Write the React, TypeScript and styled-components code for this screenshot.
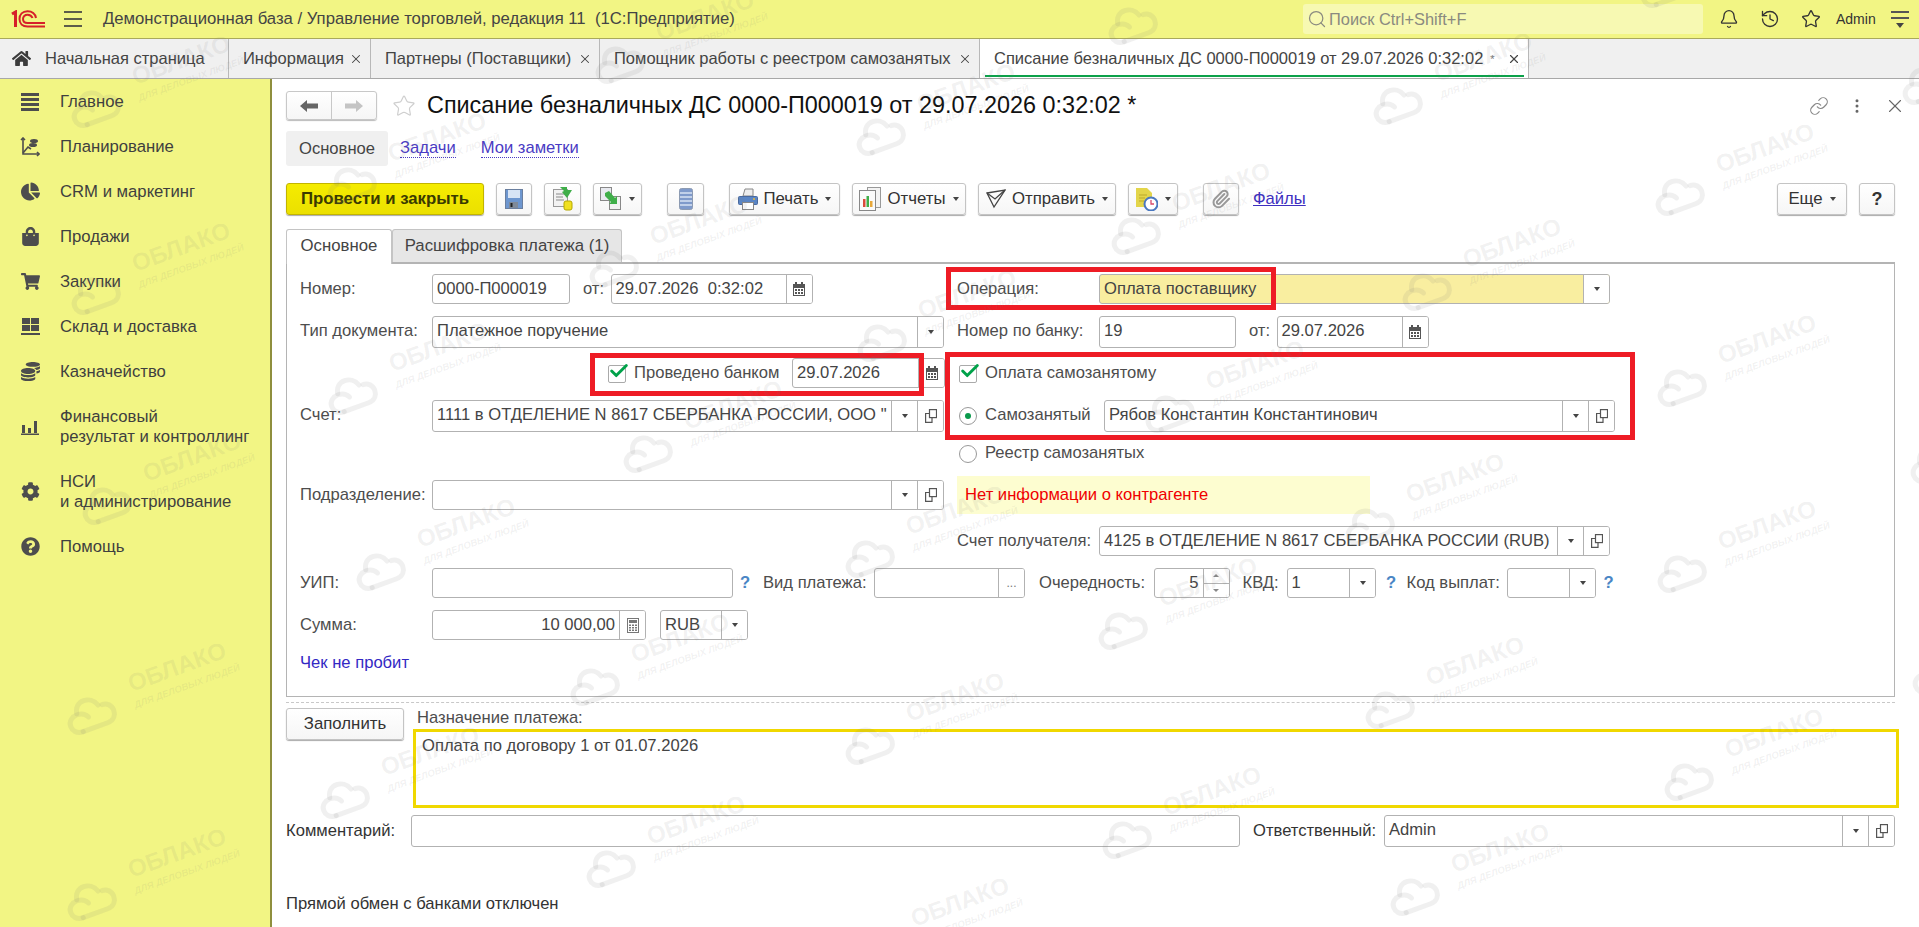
import React from "react";
import styled, { createGlobalStyle } from "styled-components";
import { Bell, Check, History, Link as LinkIcon, MoreVertical, Paperclip, Search, Star, X } from "lucide-react";
import {
  FaChartPie,
  FaCoins,
  FaCog,
  FaHome,
  FaQuestionCircle,
  FaShoppingBag,
  FaShoppingCart,
} from "react-icons/fa";

const GlobalStyle = createGlobalStyle`
  html, body { margin: 0; padding: 0; background: #fff; }
  body {
    font-family: "Liberation Sans", Arial, sans-serif;
    font-size: 16.6px;
    color: #333;
  }
  * { box-sizing: border-box; }
`;

const Page = styled.div`
  position: relative;
  width: 1919px;
  height: 927px;
  overflow: hidden;
  display: flex;
  flex-direction: column;
`;

/* top bar */
const TopBar = styled.div`
  display: flex;
  align-items: center;
  height: 39px;
  flex: none;
  background: #f2f584;
  border-bottom: 1px solid #a9a95c;
  padding-left: 11px;
`;

const Burger = styled.div`
  width: 18px;
  height: 16px;
  margin-left: 19px;
  display: flex;
  flex-direction: column;
  justify-content: space-between;
  span {
    display: block;
    height: 2px;
    background: #5c5c4a;
  }
`;

const BaseTitle = styled.div`
  margin-left: 21px;
  font-size: 16.7px;
  color: #444;
  white-space: pre;
`;

const SearchBox = styled.div`
  margin-left: auto;
  margin-right: 5px;
  width: 400px;
  height: 30px;
  display: flex;
  align-items: center;
  gap: 2px;
  padding-left: 4px;
  border-radius: 3px;
  background: #f7f9b2;
  color: #8a8a80;
  font-size: 16.4px;
`;

const TopIcon = styled.div`
  width: 41px;
  display: flex;
  justify-content: center;
  color: #333;
`;

const AdminName = styled.div`
  width: 55px;
  margin-left: 5px;
  font-size: 14px;
  color: #333;
`;

const TopMenu = styled.div`
  width: 18px;
  margin-right: 10px;
  display: flex;
  flex-direction: column;
  align-items: center;
  gap: 4px;
  i {
    display: block;
    width: 18px;
    height: 2px;
    background: #555;
  }
  b {
    width: 0;
    height: 0;
    border-left: 4px solid transparent;
    border-right: 4px solid transparent;
    border-top: 5px solid #444;
  }
`;

/* open windows */
const TabBar = styled.div`
  display: flex;
  flex: none;
  height: 40px;
  background: #f0f0f0;
  border-bottom: 1px solid #a8a8a8;
`;

const WinTab = styled.div<{ $w: number; $active?: boolean }>`
  position: relative;
  width: ${(p) => p.$w}px;
  display: flex;
  align-items: center;
  padding: 0 7px 0 14px;
  border-right: 1px solid #b8b8b8;
  font-size: 16.5px;
  color: #444;
  white-space: nowrap;
  background: ${(p) => (p.$active ? "#fff" : "transparent")};
  ${(p) =>
    p.$active &&
    `&:after {
      content: "";
      position: absolute;
      left: 5px;
      right: 4px;
      bottom: 1px;
      height: 2px;
      background: #0ca14a;
    }`}
  svg.close {
    margin-left: auto;
    color: #444;
  }
`;

const HomeIcon = styled(FaHome)`
  color: #3c3c3c;
  margin: 0 14px 0 -2px;
  font-size: 19px;
`;

const Mod = styled.sup`
  font-size: 11px;
  line-height: 0;
  margin-left: 7px;
  color: #777;
`;

const Body = styled.div`
  flex: 1;
  display: flex;
  min-height: 0;
`;

/* sections panel */
const Sidebar = styled.div`
  width: 272px;
  flex: none;
  background: #f2f584;
  border-right: 2px solid #8f8f3e;
`;

const NavItem = styled.div<{ $tall?: boolean }>`
  display: flex;
  align-items: center;
  height: ${(p) => (p.$tall ? 65 : 45)}px;
  font-size: 16.7px;
  line-height: 20px;
  color: #3f3f3f;
`;

const NavIcon = styled.div`
  width: 60px;
  flex: none;
  display: flex;
  justify-content: center;
  color: #4d4d4d;
  font-size: 19px;
`;

/* document */
const Content = styled.div`
  flex: 1;
  min-width: 0;
  padding: 12px 24px 0 14px;
  background: #fff;
`;

const Header = styled.div`
  display: flex;
  align-items: center;
  height: 29px;
`;

const NavPair = styled.div`
  display: flex;
  width: 91px;
  height: 29px;
  border: 1px solid #c8c8c8;
  border-radius: 3px;
  box-shadow: 0 1px 1px #bbb;
  background: linear-gradient(#fff, #f6f6f6);
  div {
    flex: 1;
    display: flex;
    align-items: center;
    justify-content: center;
  }
  div + div {
    border-left: 1px solid #c8c8c8;
  }
`;

const FavStar = styled(Star)`
  margin-left: 15px;
  color: #cfcfcf;
`;

const DocTitle = styled.div`
  margin-left: 11px;
  font-size: 23.4px;
  color: #111;
  white-space: nowrap;
`;

const HeadTools = styled.div`
  margin-left: auto;
  margin-right: -19px;
  display: flex;
  align-items: center;
  color: #8a8a8a;
`;

const HeadTool = styled.div`
  width: 38px;
  display: flex;
  justify-content: center;
  color: #666;
`;

const PageTabs = styled.div`
  display: flex;
  align-items: center;
  height: 35px;
  margin-top: 11px;
`;

const PagePill = styled.div`
  width: 102px;
  height: 35px;
  line-height: 35px;
  text-align: center;
  border-radius: 3px;
  background: #f0f0f0;
  color: #444;
`;

const PageLink = styled.a`
  margin-left: 12px;
  margin-right: 13px;
  color: #4a3bc4;
  line-height: 18px;
  border-bottom: 1px dotted #4a3bc4;
`;

const CommandBar = styled.div`
  display: flex;
  align-items: center;
  gap: 25px;
  height: 32px;
  margin-top: 17px;
`;

const Group = styled.div`
  display: flex;
  align-items: center;
  gap: 12px;
`;

const ToolButton = styled.div<{ $w: number }>`
  width: ${(p) => p.$w}px;
  height: 32px;
  display: flex;
  align-items: center;
  justify-content: center;
  gap: 6px;
  font-size: 16.8px;
  color: #333;
  white-space: nowrap;
  border: 1px solid #c4c4c4;
  border-radius: 3px;
  background: linear-gradient(#fff, #f6f6f6);
  box-shadow: 0 1px 1px #aaa;
`;

const PrimaryButton = styled(ToolButton)`
  font-weight: 700;
  color: #3a3a00;
  background: linear-gradient(#f5ec00, #ebe000);
  border-color: #c2b400;
`;

const Caret = styled.span`
  width: 0;
  height: 0;
  flex: none;
  margin-left: 1px;
  border-left: 3px solid transparent;
  border-right: 3px solid transparent;
  border-top: 4px solid #444;
`;

const SpinUp = styled(Caret)`
  margin: 0;
  border-top: none;
  border-bottom: 3px solid #888;
`;

const SpinDown = styled(Caret)`
  margin: 0;
  border-top: 3px solid #888;
`;

const FilesLink = styled.a`
  margin-left: -11px;
  color: #3d2fc0;
  text-decoration: underline;
`;

const BarEnd = styled(Group)`
  margin-left: auto;
`;

const HelpMark = styled.b`
  font-size: 18px;
`;

const FormTabs = styled.div`
  display: flex;
  height: 33px;
  margin-top: 14px;
  font-size: 16.8px;
`;

const FormTab = styled.div<{ $w: number; $active?: boolean }>`
  position: relative;
  z-index: 1;
  width: ${(p) => p.$w}px;
  height: ${(p) => (p.$active ? 35 : 33)}px;
  line-height: 31px;
  text-align: center;
  border: 1px solid #c4c4c4;
  border-bottom: none;
  border-radius: 3px 3px 0 0;
  color: #444;
  background: ${(p) => (p.$active ? "#fff" : "#e6e6e6")};
`;

const Panel = styled.div`
  position: relative;
  height: 435px;
  border: 1px solid #b4b4b4;
  border-top: 2px solid #b4b4b4;
  padding: 10px 0 0 13px;
`;

const Columns = styled.div`
  display: flex;
`;

const LeftColumn = styled.div`
  width: 645px;
  display: grid;
  grid-auto-rows: 42px;
`;

const RightColumn = styled(LeftColumn)`
  width: 680px;
  margin-left: 12px;
`;

const Row = styled.div<{ $end?: boolean; $up?: number }>`
  display: flex;
  align-items: flex-start;
  height: 42px;
  margin-top: ${(p) => -(p.$up ?? 0)}px;
  justify-content: ${(p) => (p.$end ? "flex-end" : "flex-start")};
`;

const Label = styled.div<{ $w: number; $ml?: number }>`
  width: ${(p) => p.$w}px;
  flex: none;
  margin-left: ${(p) => p.$ml ?? 0}px;
  line-height: 30px;
  color: #4d4d4d;
  white-space: nowrap;
`;

const Field = styled.div<{ $w: number; $h?: number; $fill?: string; $ml?: number }>`
  display: flex;
  flex: none;
  width: ${(p) => p.$w}px;
  height: ${(p) => p.$h ?? 30}px;
  margin-left: ${(p) => p.$ml ?? 0}px;
  border: 1px solid #b2b2b2;
  border-radius: 3px;
  background: ${(p) => p.$fill ?? "#fff"};
  overflow: hidden;
`;

const Value = styled.div<{ $right?: boolean }>`
  flex: 1;
  min-width: 0;
  padding: 0 4px;
  line-height: 28px;
  color: #444;
  white-space: pre;
  overflow: hidden;
  text-align: ${(p) => (p.$right ? "right" : "left")};
`;

const Addon = styled.div`
  width: 26px;
  flex: none;
  display: flex;
  align-items: center;
  justify-content: center;
  border-left: 1px solid #b2b2b2;
  background: #fff;
  color: #777;
  font-size: 12px;
`;

const Spin = styled(Addon)`
  flex-direction: column;
`;

const SpinCell = styled.div`
  flex: 1;
  width: 100%;
  display: flex;
  align-items: center;
  justify-content: center;
  & + & {
    border-top: 1px solid #b2b2b2;
  }
`;

const Help = styled.div<{ $w: number; $pr?: number }>`
  width: ${(p) => p.$w}px;
  flex: none;
  padding-right: ${(p) => p.$pr ?? 0}px;
  text-align: center;
  line-height: 30px;
  font-weight: 700;
  color: #4a86c5;
`;

const CheckBox = styled.div`
  position: relative;
  width: 18px;
  height: 18px;
  flex: none;
  margin: 7px 8px 0 2px;
  border: 1px solid #aaa;
  border-radius: 2px;
  svg {
    position: absolute;
    left: -1px;
    top: -6px;
    color: #00a24a;
  }
`;

const Radio = styled.div<{ $on?: boolean }>`
  position: relative;
  width: 18px;
  height: 18px;
  flex: none;
  margin: 7px 8px 0 2px;
  border: 1px solid #999;
  border-radius: 50%;
  ${(p) =>
    p.$on &&
    `&:after {
      content: "";
      position: absolute;
      left: 5px;
      top: 5px;
      width: 6px;
      height: 6px;
      border-radius: 50%;
      background: #0a9a4c;
    }`}
`;

const Notice = styled.div`
  width: 413px;
  height: 38px;
  margin-top: -8px;
  padding-left: 8px;
  line-height: 38px;
  background: #fdfdd0;
  color: #f00000;
`;

const CheckLink = styled.a`
  line-height: 22px;
  color: #3328c4;
`;

const RedFrame = styled.div<{ $x: number; $y: number; $w: number; $h: number }>`
  position: absolute;
  left: ${(p) => p.$x}px;
  top: ${(p) => p.$y}px;
  width: ${(p) => p.$w}px;
  height: ${(p) => p.$h}px;
  border: 5px solid #ee1c25;
  pointer-events: none;
`;

const DottedLine = styled.div`
  margin-top: 5px;
  border-top: 1px dashed #c8c8c8;
`;

const PurposeRow = styled.div`
  display: flex;
  margin-top: 5px;
`;

const FillButton = styled(ToolButton)`
  flex: none;
`;

const PurposeBlock = styled.div`
  flex: 1;
  margin: 0 -4px 0 9px;
`;

const PurposeLabel = styled.div`
  height: 21px;
  padding-left: 4px;
  line-height: 20px;
  color: #4d4d4d;
`;

const PurposeBox = styled.div`
  height: 79px;
  border: 3px solid #f0d800;
  padding: 4px 6px;
  line-height: 20px;
  color: #444;
`;

const CommentRow = styled.div`
  display: flex;
  margin-top: 7px;
`;

const PlainLabel = styled(Label)`
  line-height: 32px;
  color: #333;
`;

const BankNote = styled.div`
  margin-top: 47px;
  line-height: 20px;
  color: #333;
`;

/* watermark */
const Marks = styled.div`
  position: absolute;
  inset: 0;
  pointer-events: none;
  overflow: hidden;
  z-index: 5;
`;

const Mark = styled.div<{ $x: number; $y: number }>`
  position: absolute;
  left: ${(p) => p.$x - 120}px;
  top: ${(p) => p.$y - 40}px;
  width: 240px;
  height: 120px;
`;

const MarkTitle = styled.div`
  position: absolute;
  left: 120px;
  top: 40px;
  transform: translate(-50%, -50%) rotate(-20deg);
  font-size: 24px;
  font-weight: 700;
  line-height: 1;
  color: rgba(120, 120, 120, 0.1);
  white-space: nowrap;
`;

const MarkSub = styled(MarkTitle)`
  left: 130px;
  top: 59px;
  font-size: 9.5px;
  font-style: italic;
`;

const MarkCloud = styled.svg`
  position: absolute;
  left: 8px;
  top: 66px;
  width: 52px;
  height: 44px;
  transform: rotate(-20deg);
`;

const markPlaces = [
  [181, 60], [181, 247], [192, 457], [177, 667], [177, 853],
  [437, 137], [438, 347], [466, 523], [430, 751],
  [705, 16], [699, 220], [733, 405], [680, 638], [696, 820],
  [966, 88], [967, 294], [955, 510], [955, 697], [960, 902],
  [1218, -23], [1221, 187], [1255, 365], [1208, 582], [1212, 791],
  [1483, 57], [1512, 243], [1455, 478], [1475, 661], [1500, 848],
  [1750, -60], [1765, 148], [1767, 339], [1767, 525], [1774, 733],
  [2012, 37], [2020, 416], [2022, 627],
];

const Watermarks = () => (
  <Marks>
    {markPlaces.map(([x, y]) => (
      <Mark key={`${x}-${y}`} $x={x} $y={y}>
        {x < 1919 && y > 0 && <MarkTitle>ОБЛАКО</MarkTitle>}
        {x < 1919 && y > 0 && <MarkSub>ДЛЯ ДЕЛОВЫХ ЛЮДЕЙ</MarkSub>}
        <MarkCloud viewBox="0 0 52 44" fill="none" stroke="rgba(120,120,120,0.11)" strokeWidth="5" strokeLinecap="round">
          <path d="M13 35 H39 C46 35 49 30 49 25 C49 20 45 16 40 16" />
          <path d="M36 15 C34 9 29 6 24 6 C18 6 14 10 13 16" />
          <path d="M13 35 C6 35 3 30 3 26 C3 20 8 17 13 17 C17 17 21 19 23 23" />
        </MarkCloud>
      </Mark>
    ))}
  </Marks>
);

/* drawn icons */
const Logo = () => (
  <svg width="34" height="18" viewBox="0 0 34 18" fill="none" stroke="#d6202a">
    <path d="M1 4 L4.5 2 V17" strokeWidth="3" />
    <path d="M25 8 C24 3 20 1.2 16.5 1.2 C11.5 1.2 8.5 4.5 8.5 9 C8.5 13.5 11.5 16.5 16.5 16.5 H34" strokeWidth="2" />
    <path d="M21.5 8 C20.5 5.5 19 4.7 16.5 4.7 C13.8 4.7 12 6.5 12 9 C12 11.5 13.8 13 16.5 13 H34" strokeWidth="2" />
  </svg>
);

const MenuBars = () => (
  <svg width="18" height="18" viewBox="0 0 18 18" fill="#4d4d4d">
    <rect y="0" width="18" height="3" />
    <rect y="5" width="18" height="3" />
    <rect y="10" width="18" height="3" />
    <rect y="15" width="18" height="3" />
  </svg>
);

const PlanIcon = () => (
  <svg width="20" height="20" viewBox="0 0 20 20" fill="none" stroke="#4d4d4d" strokeWidth="1.6">
    <path d="M3 1 V17 H19" />
    <path d="M1 3 L3 1 L5 3 M17 15 L19 17 L17 19" />
    <path d="M3 16 L8 10 L11 12" />
    <ellipse cx="14" cy="4" rx="4" ry="2" fill="#4d4d4d" stroke="none" />
    <ellipse cx="13" cy="8" rx="4" ry="2" fill="#4d4d4d" stroke="none" />
  </svg>
);

const StoreIcon = () => (
  <svg width="19" height="19" viewBox="0 0 19 19" fill="#4d4d4d">
    <rect x="1" y="1" width="8" height="6" />
    <rect x="10" y="1" width="8" height="6" />
    <rect x="1" y="8" width="8" height="6" />
    <rect x="10" y="8" width="8" height="6" />
    <rect x="0" y="16" width="19" height="2" />
  </svg>
);

const BarsIcon = () => (
  <svg width="18" height="16" viewBox="0 0 18 16" fill="#4d4d4d">
    <rect x="1" y="6" width="3" height="8" />
    <rect x="7" y="9" width="3" height="5" />
    <rect x="13" y="2" width="3" height="12" />
    <rect x="0" y="14.5" width="18" height="1.5" />
  </svg>
);

const ArrowLeft = () => (
  <svg width="18" height="12" viewBox="0 0 18 12" fill="#666">
    <path d="M0 6 L7 0 V3.5 H18 V8.5 H7 V12 Z" />
  </svg>
);

const ArrowRight = () => (
  <svg width="18" height="12" viewBox="0 0 18 12" fill="#c4c4c4">
    <path d="M18 6 L11 0 V3.5 H0 V8.5 H11 V12 Z" />
  </svg>
);

const SaveIcon = () => (
  <svg width="18" height="20" viewBox="0 0 18 20">
    <rect x="0.5" y="0.5" width="17" height="19" fill="#6d96cf" stroke="#6a7f9f" />
    <rect x="3" y="1" width="12" height="8" fill="#d7e4f5" />
    <rect x="4" y="13" width="9" height="6" fill="#7f8a99" />
    <rect x="5.5" y="14" width="2" height="4" fill="#222" />
  </svg>
);

const PostIcon = () => (
  <svg width="20" height="24" viewBox="0 0 20 24">
    <rect x="0.5" y="2.5" width="14" height="17" fill="#f2f2f2" stroke="#999" />
    <path d="M3 7 H12 M3 10 H10 M3 13 H11" stroke="#8a8a8a" />
    <path d="M7 0 L14 0 L14 3 L19 3 L14 11 L9 5 L11 4 Z" fill="#3fae49" />
    <rect x="11" y="14" width="8" height="9" rx="2" fill="#f0e020" stroke="#b5a800" />
  </svg>
);

const CopyIcon = () => (
  <svg width="22" height="24" viewBox="0 0 22 24">
    <rect x="0.5" y="0.5" width="11" height="13" fill="#e8eaf0" stroke="#888" />
    <rect x="9.5" y="9.5" width="11" height="13" fill="#f2f2f2" stroke="#888" />
    <path d="M5 6 L9 4 L15 11 L17 9 L17 17 L9 17 L11 15 L5 9 Z" fill="#3fae49" />
  </svg>
);

const StackIcon = () => (
  <svg width="14" height="22" viewBox="0 0 14 22">
    <rect x="0.5" y="0.5" width="13" height="21" rx="2" fill="#7f9acb" stroke="#8d9bb2" />
    <path d="M1 5 H13 M1 9 H13 M1 13 H13 M1 17 H13" stroke="#d7e2f3" strokeWidth="1.4" />
  </svg>
);

const PrintIcon = () => (
  <svg width="20" height="22" viewBox="0 0 20 22">
    <path d="M5 8 L7 1 H15 V8 Z" fill="#eee" stroke="#888" />
    <rect x="0.5" y="8.5" width="19" height="8" rx="1" fill="#5b86c5" stroke="#4a6a9f" />
    <rect x="4.5" y="14.5" width="11" height="7" fill="#fff" stroke="#888" />
    <circle cx="16" cy="11" r="1" fill="#e8b83a" />
  </svg>
);

const ReportIcon = () => (
  <svg width="22" height="24" viewBox="0 0 22 24">
    <rect x="8.5" y="0.5" width="13" height="20" fill="#f3f3f3" stroke="#999" />
    <rect x="0.5" y="3.5" width="16" height="20" fill="#fafafa" stroke="#888" />
    <rect x="4" y="12" width="2.5" height="8" fill="#d94b3b" />
    <rect x="7.5" y="9" width="2.5" height="11" fill="#3fae49" />
    <rect x="11" y="14" width="2.5" height="6" fill="#e8a83a" />
  </svg>
);

const SendIcon = () => (
  <svg width="20" height="20" viewBox="0 0 20 20" fill="none" stroke="#444" strokeWidth="1.3">
    <path d="M1 4 L19 1 L8 18 Z" />
    <path d="M1 4 L9 10 L19 1" />
  </svg>
);

const DocClockIcon = () => (
  <svg width="22" height="24" viewBox="0 0 22 24">
    <path d="M0 1 H11 L16 6 V20 H0 Z" fill="#e3d54a" />
    <path d="M3 8 H11 M3 11 H9 M3 14 H8" stroke="#bba92a" />
    <circle cx="15" cy="17" r="6.5" fill="#fff" stroke="#4a78c0" strokeWidth="2" />
    <path d="M15 13 V17 H18" stroke="#d94b6b" strokeWidth="1.3" fill="none" />
  </svg>
);

const CalendarIcon = () => (
  <svg width="12" height="14" viewBox="0 0 12 14" fill="#555">
    <rect x="2" y="0" width="2" height="3" />
    <rect x="8" y="0" width="2" height="3" />
    <path d="M0 2 H12 V14 H0 Z M1 6 V13 H11 V6 Z" fillRule="evenodd" />
    <path d="M2 7 H4 V9 H2 Z M5 7 H7 V9 H5 Z M8 7 H10 V9 H8 Z M2 10 H4 V12 H2 Z M5 10 H7 V12 H5 Z M8 10 H10 V12 H8 Z" />
  </svg>
);

const CalcIcon = () => (
  <svg width="12" height="15" viewBox="0 0 12 15" fill="#777">
    <path d="M0 0 H12 V15 H0 Z M1 1 V14 H11 V1 Z" fillRule="evenodd" />
    <rect x="2" y="2" width="8" height="3" />
    <path d="M2 6.5 H4 V8 H2 Z M5 6.5 H7 V8 H5 Z M8 6.5 H10 V8 H8 Z M2 9 H4 V10.5 H2 Z M5 9 H7 V10.5 H5 Z M8 9 H10 V10.5 H8 Z M2 11.5 H4 V13 H2 Z M5 11.5 H7 V13 H5 Z M8 11.5 H10 V13 H8 Z" />
  </svg>
);

const OpenIcon = () => (
  <svg width="12" height="14" viewBox="0 0 12 14" fill="none" stroke="#555" strokeWidth="1.2">
    <rect x="4.5" y="0.6" width="7" height="8" />
    <path d="M4 4.5 H0.6 V13.4 H7 V9" />
  </svg>
);

const Drop = () => <Addon><Caret /></Addon>;
const Open = () => <Addon><OpenIcon /></Addon>;
const Cal = () => <Addon><CalendarIcon /></Addon>;

const App = () => (
  <Page>
    <GlobalStyle />
    <TopBar>
      <Logo />
      <Burger><span /><span /><span /></Burger>
      <BaseTitle>Демонстрационная база / Управление торговлей, редакция 11  (1С:Предприятие)</BaseTitle>
      <SearchBox>
        <Search size={20} strokeWidth={1.5} />
        Поиск Ctrl+Shift+F
      </SearchBox>
      <TopIcon><Bell size={20} strokeWidth={1.6} /></TopIcon>
      <TopIcon><History size={20} strokeWidth={1.6} /></TopIcon>
      <TopIcon><Star size={20} strokeWidth={1.6} /></TopIcon>
      <AdminName>Admin</AdminName>
      <TopMenu><i /><i /><b /></TopMenu>
    </TopBar>

    <TabBar>
      <WinTab $w={229}><HomeIcon />Начальная страница</WinTab>
      <WinTab $w={142}>Информация<X className="close" size={14} strokeWidth={1.8} /></WinTab>
      <WinTab $w={229}>Партнеры (Поставщики)<X className="close" size={14} strokeWidth={1.8} /></WinTab>
      <WinTab $w={380}>Помощник работы с реестром самозанятых<X className="close" size={14} strokeWidth={1.8} /></WinTab>
      <WinTab $w={549} $active>
        Списание безналичных ДС 0000-П000019 от 29.07.2026 0:32:02<Mod>*</Mod>
        <X className="close" size={14} strokeWidth={2} />
      </WinTab>
    </TabBar>

    <Body>
      <Sidebar>
        <NavItem><NavIcon><MenuBars /></NavIcon>Главное</NavItem>
        <NavItem><NavIcon><PlanIcon /></NavIcon>Планирование</NavItem>
        <NavItem><NavIcon><FaChartPie /></NavIcon>CRM и маркетинг</NavItem>
        <NavItem><NavIcon><FaShoppingBag /></NavIcon>Продажи</NavItem>
        <NavItem><NavIcon><FaShoppingCart /></NavIcon>Закупки</NavItem>
        <NavItem><NavIcon><StoreIcon /></NavIcon>Склад и доставка</NavItem>
        <NavItem><NavIcon><FaCoins /></NavIcon>Казначейство</NavItem>
        <NavItem $tall><NavIcon><BarsIcon /></NavIcon><span>Финансовый<br />результат и контроллинг</span></NavItem>
        <NavItem $tall><NavIcon><FaCog /></NavIcon><span>НСИ<br />и администрирование</span></NavItem>
        <NavItem><NavIcon><FaQuestionCircle /></NavIcon>Помощь</NavItem>
      </Sidebar>

      <Content>
        <Header>
          <NavPair>
            <div><ArrowLeft /></div>
            <div><ArrowRight /></div>
          </NavPair>
          <FavStar size={24} strokeWidth={1.2} />
          <DocTitle>Списание безналичных ДС 0000-П000019 от 29.07.2026 0:32:02 *</DocTitle>
          <HeadTools>
            <HeadTool><LinkIcon size={20} strokeWidth={1.4} color="#888" /></HeadTool>
            <HeadTool><MoreVertical size={18} strokeWidth={2} /></HeadTool>
            <HeadTool><X size={22} strokeWidth={1.2} /></HeadTool>
          </HeadTools>
        </Header>

        <PageTabs>
          <PagePill>Основное</PagePill>
          <PageLink>Задачи</PageLink>
          <PageLink>Мои заметки</PageLink>
        </PageTabs>

        <CommandBar>
          <Group>
            <PrimaryButton $w={198}>Провести и закрыть</PrimaryButton>
            <ToolButton $w={36}><SaveIcon /></ToolButton>
            <ToolButton $w={37}><PostIcon /></ToolButton>
            <ToolButton $w={49}><CopyIcon /><Caret /></ToolButton>
          </Group>
          <ToolButton $w={37}><StackIcon /></ToolButton>
          <Group>
            <ToolButton $w={111}><PrintIcon />Печать<Caret /></ToolButton>
            <ToolButton $w={114}><ReportIcon />Отчеты<Caret /></ToolButton>
            <ToolButton $w={138}><SendIcon />Отправить<Caret /></ToolButton>
            <ToolButton $w={50}><DocClockIcon /><Caret /></ToolButton>
          </Group>
          <ToolButton $w={36}><Paperclip size={20} strokeWidth={2.4} color="#999" /></ToolButton>
          <FilesLink>Файлы</FilesLink>
          <BarEnd>
            <ToolButton $w={70}>Еще<Caret /></ToolButton>
            <ToolButton $w={36}><HelpMark>?</HelpMark></ToolButton>
          </BarEnd>
        </CommandBar>

        <FormTabs>
          <FormTab $w={106} $active>Основное</FormTab>
          <FormTab $w={230}>Расшифровка платежа (1)</FormTab>
        </FormTabs>

        <Panel>
          <Columns>
            <LeftColumn>
              <Row>
                <Label $w={132}>Номер:</Label>
                <Field $w={138}><Value>0000-П000019</Value></Field>
                <Label $w={27.5} $ml={13}>от:</Label>
                <Field $w={202}><Value>29.07.2026  0:32:02</Value><Cal /></Field>
              </Row>
              <Row>
                <Label $w={132}>Тип документа:</Label>
                <Field $w={512} $h={32}><Value>Платежное поручение</Value><Drop /></Field>
              </Row>
              <Row $end>
                <CheckBox><Check size={22} strokeWidth={3.2} /></CheckBox>
                <Label $w={158}>Проведено банком</Label>
                <Field $w={153}><Value>29.07.2026</Value><Cal /></Field>
              </Row>
              <Row>
                <Label $w={132}>Счет:</Label>
                <Field $w={512} $h={32}>
                  <Value>1111 в ОТДЕЛЕНИЕ N 8617 СБЕРБАНКА РОССИИ, ООО "</Value>
                  <Drop />
                  <Open />
                </Field>
              </Row>
              <Row />
              <Row $up={4}>
                <Label $w={132}>Подразделение:</Label>
                <Field $w={512}><Value /><Drop /><Open /></Field>
              </Row>
              <Row />
            </LeftColumn>

            <RightColumn>
              <Row>
                <Label $w={142}>Операция:</Label>
                <Field $w={511} $fill="#f9eea0"><Value>Оплата поставщику</Value><Drop /></Field>
              </Row>
              <Row>
                <Label $w={142}>Номер по банку:</Label>
                <Field $w={137} $h={32}><Value>19</Value></Field>
                <Label $w={27.5} $ml={13}>от:</Label>
                <Field $w={152} $h={32}><Value>29.07.2026</Value><Cal /></Field>
              </Row>
              <Row>
                <CheckBox><Check size={22} strokeWidth={3.2} /></CheckBox>
                <Label $w={300}>Оплата самозанятому</Label>
              </Row>
              <Row>
                <Radio $on />
                <Label $w={119}>Самозанятый</Label>
                <Field $w={511} $h={32}><Value>Рябов Константин Константинович</Value><Drop /><Open /></Field>
              </Row>
              <Row $up={4}>
                <Radio />
                <Label $w={300}>Реестр самозанятых</Label>
              </Row>
              <Row>
                <Notice>Нет информации о контрагенте</Notice>
              </Row>
              <Row>
                <Label $w={142}>Счет получателя:</Label>
                <Field $w={511}><Value>4125 в ОТДЕЛЕНИЕ N 8617 СБЕРБАНКА РОССИИ (RUB)</Value><Drop /><Open /></Field>
              </Row>
            </RightColumn>
          </Columns>

          <Row>
            <Label $w={132}>УИП:</Label>
            <Field $w={301}><Value /></Field>
            <Help $w={30} $pr={6}>?</Help>
            <Label $w={111}>Вид платежа:</Label>
            <Field $w={151}><Value /><Addon>...</Addon></Field>
            <Label $w={114.5} $ml={14}>Очередность:</Label>
            <Field $w={76}>
              <Value $right>5</Value>
              <Spin>
                <SpinCell><SpinUp /></SpinCell>
                <SpinCell><SpinDown /></SpinCell>
              </Spin>
            </Field>
            <Label $w={44} $ml={13}>КВД:</Label>
            <Field $w={89}><Value>1</Value><Drop /></Field>
            <Help $w={31}>?</Help>
            <Label $w={100}>Код выплат:</Label>
            <Field $w={89}><Value /><Drop /></Field>
            <Help $w={26}>?</Help>
          </Row>
          <Row>
            <Label $w={132}>Сумма:</Label>
            <Field $w={214}><Value $right>10 000,00</Value><Addon><CalcIcon /></Addon></Field>
            <Field $w={88} $ml={14}><Value>RUB</Value><Drop /></Field>
          </Row>
          <Row>
            <CheckLink>Чек не пробит</CheckLink>
          </Row>

          <RedFrame $x={303} $y={89} $w={334} $h={43} />
          <RedFrame $x={659} $y={3} $w={330} $h={43} />
          <RedFrame $x={658} $y={88} $w={690} $h={88} />
        </Panel>

        <DottedLine />

        <PurposeRow>
          <FillButton $w={118}>Заполнить</FillButton>
          <PurposeBlock>
            <PurposeLabel>Назначение платежа:</PurposeLabel>
            <PurposeBox>Оплата по договору 1 от 01.07.2026</PurposeBox>
          </PurposeBlock>
        </PurposeRow>

        <CommentRow>
          <PlainLabel $w={125}>Комментарий:</PlainLabel>
          <Field $w={829} $h={32}><Value /></Field>
          <PlainLabel $w={131} $ml={13}>Ответственный:</PlainLabel>
          <Field $w={511} $h={32}><Value>Admin</Value><Drop /><Open /></Field>
        </CommentRow>

        <BankNote>Прямой обмен с банками отключен</BankNote>
      </Content>
    </Body>
    <Watermarks />
  </Page>
);

export default App;
